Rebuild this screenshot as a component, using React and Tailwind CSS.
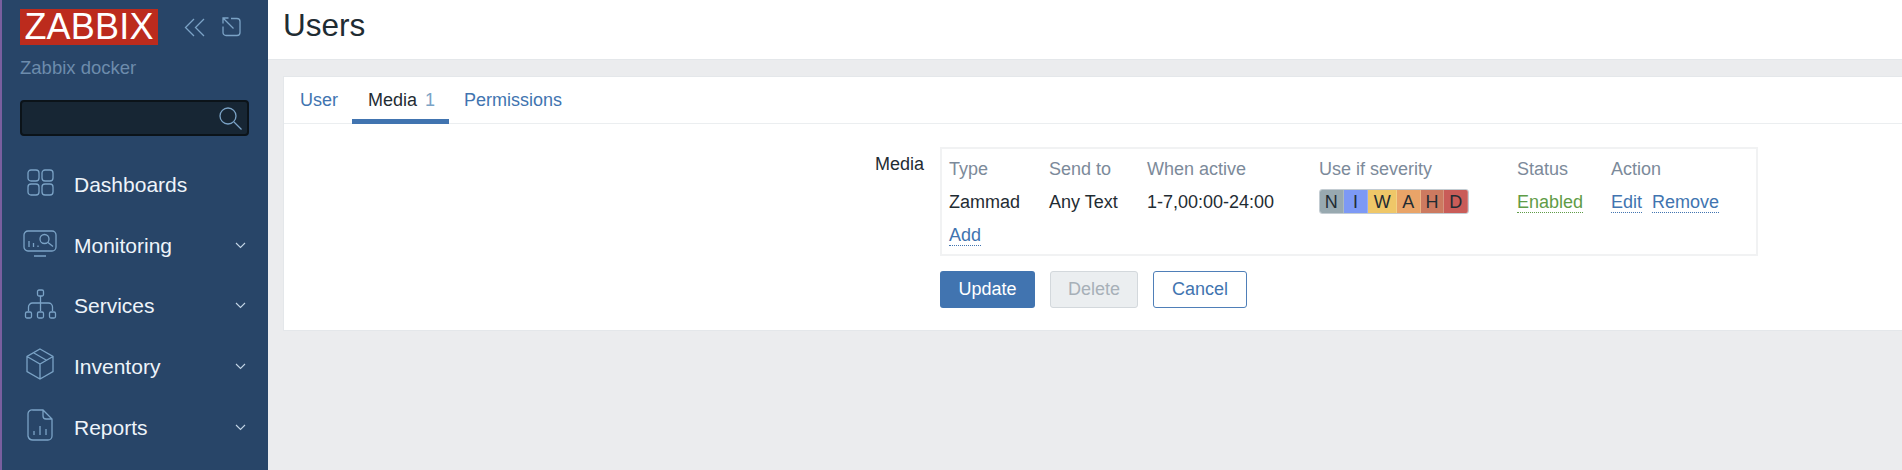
const F = { fontFamily: '"Liberation Sans", Arial, sans-serif' };

const Chevron = () => (
  <svg width="11" height="7" viewBox="0 0 11 7" fill="none" stroke="#c3d5e6" strokeWidth="1.100" className="ml-auto mr-[22px] shrink-0">
    <path d="M1 1l4.500 4.500L10 1" />
  </svg>
);

const S = { fill: "none", stroke: "#7ba3c6", strokeWidth: 1.3 };

const icons = {
  dash: (
    <svg width="27" height="27" viewBox="0 0 27 27" {...S}>
      <rect x="1" y="1" width="11" height="11" rx="3" />
      <rect x="15" y="1" width="11" height="11" rx="3" />
      <rect x="1" y="15" width="11" height="11" rx="3" />
      <rect x="15" y="15" width="11" height="11" rx="3" />
    </svg>
  ),
  mon: (
    <svg width="34" height="27" viewBox="0 0 34 27" {...S}>
      <rect x="1" y="1" width="32" height="20" rx="4" />
      <path d="M6 11v6M10.500 13v4M15 15.500v1.500" />
      <circle cx="21.500" cy="9" r="4.500" />
      <path d="m25 12.500 5 4M11 26h12" />
    </svg>
  ),
  serv: (
    <svg width="33" height="30" viewBox="0 0 33 30" {...S}>
      <rect x="13.500" y="1" width="6" height="6" rx="1.500" />
      <path d="M16.500 7v15M4.500 22v-4a4 4 0 0 1 4-4h16a4 4 0 0 1 4 4v4" />
      <rect x="1.500" y="23" width="6" height="6" rx="1.500" />
      <rect x="13.500" y="23" width="6" height="6" rx="1.500" />
      <rect x="25.500" y="23" width="6" height="6" rx="1.500" />
    </svg>
  ),
  inv: (
    <svg width="30" height="32" viewBox="0 0 30 32" {...S}>
      <path d="M15 1 28 8.500v15L15 31 2 23.500v-15zM2 8.500 15 16l13-7.500M15 16v15M8.500 4.800l13 7.500" />
    </svg>
  ),
  rep: (
    <svg width="26" height="32" viewBox="0 0 26 32" {...S}>
      <path d="M6 1h10l9 9v17a4 4 0 0 1-4 4H6a5 5 0 0 1-5-4V5a4 4 0 0 1 5-4zM16 1v6a3 3 0 0 0 3 3h6" />
      <path d="M7 22v4M13 17v9M19 20v6" />
    </svg>
  ),
};

const NavItem = ({ icon, label, chevron }) => (
  <div className="flex h-[60.700px] items-center text-[21px] leading-none text-[#eef4fa]">
    <div className="mb-[4px] flex w-[72px] shrink-0 justify-center pl-[4px]">{icon}</div>
    <span>{label}</span>
    {chevron && <Chevron />}
  </div>
);

const sev = [
  ["N", "bg-[#98a9b0]", "w-[24px]"],
  ["I", "bg-[#7d99f5]", "w-[25px]"],
  ["W", "bg-[#efc768]", "w-[29px]"],
  ["A", "bg-[#e9a468]", "w-[24px]"],
  ["H", "bg-[#cc7a60]", "w-[24px]"],
  ["D", "bg-[#c95c58]", "w-[24px]"],
];

const Link = ({ children, className = "" }) => (
  <span className={`border-b-[1.500px] border-dotted border-[#4174b0] text-[#4174b0] leading-[20px] ${className}`}>{children}</span>
);

const cols = "grid grid-cols-[100px_98px_172px_198px_94px_1fr]";

export default function App() {
  return (
    <div style={F} className="flex h-[470px] w-[1902px] overflow-hidden bg-[#ebecee]">
      <aside className="flex w-[268px] shrink-0 flex-col border-l-2 border-[#7a5f9f] bg-[#284568]">
        <div className="flex items-start pl-[18px] pt-[9px]">
          <div className="flex h-[36px] w-[138px] items-center justify-center bg-[#bc2b1d] text-[36px] leading-none tracking-[0.2px] text-white">ZABBIX</div>
          <svg width="21" height="19" viewBox="0 0 21 19" fill="none" stroke="#7ba3c6" strokeWidth="1.300" className="ml-[26px] mt-[9px]">
            <path d="M10 1 1.500 9.500 10 18M20 1l-8.500 8.500L20 18" />
          </svg>
          <svg width="19" height="20" viewBox="0 0 19 20" fill="none" stroke="#7ba3c6" strokeWidth="1.300" className="ml-[17px] mt-[8px]">
            <path d="M9 1.500h6a3 3 0 0 1 3 3v11a3 3 0 0 1-3 3H4a3 3 0 0 1-3-3V9.500M1.500 1.500l10 10M1 6.500V1h5.500" />
          </svg>
        </div>
        <div className="ml-[18px] mt-[13px] text-[18.500px] leading-[20px] text-[#6d8cac]">Zabbix docker</div>
        <div className="ml-[18px] mt-[22px] flex h-[36px] w-[229px] items-center justify-end rounded-[4px] border-2 border-[#0b1319] bg-[#172634] pr-[5px]">
          <svg width="23" height="23" viewBox="0 0 23 23" fill="none" stroke="#7ba3c6" strokeWidth="1.300">
            <circle cx="9" cy="9" r="8" />
            <path d="m15 15 7.500 7.500" />
          </svg>
        </div>
        <nav className="mt-[18px] flex flex-col">
          <NavItem icon={icons.dash} label="Dashboards" />
          <NavItem icon={icons.mon} label="Monitoring" chevron />
          <NavItem icon={icons.serv} label="Services" chevron />
          <NavItem icon={icons.inv} label="Inventory" chevron />
          <NavItem icon={icons.rep} label="Reports" chevron />
        </nav>
      </aside>

      <main className="min-w-0 flex-1">
        <header className="flex h-[60px] items-start border-b border-[#e4e7ea] bg-white pl-[15px] pt-[7px]">
          <h1 className="text-[31.500px] leading-[36px] text-[#1f2c33]">Users</h1>
        </header>
        <section className="ml-[15px] mt-[16px] h-[255px] border border-[#e4e7ea] border-r-0 bg-white">
          <div className="flex h-[47px] items-stretch border-b border-[#ebeef0] text-[18px]">
            <div className="flex items-center pl-[16px] pr-[14px] pt-[1px] text-[#4174b0]">User</div>
            <div className="-mb-[1px] flex items-center gap-[8px] border-b-[5px] border-[#4174b0] pl-[16px] pr-[14px] pt-[4px] text-[#1f2c33]">
              Media <span className="text-[18px] text-[#7ba3c6]">1</span>
            </div>
            <div className="flex items-center px-[15px] pt-[1px] text-[#4174b0]">Permissions</div>
          </div>

          <div className="flex pt-[23px] text-[18px] text-[#1f2c33]">
            <div className="w-[640px] shrink-0 pt-[7px] text-right leading-[20px]">Media</div>
            <div className="ml-[16px] flex flex-col">
              <div className="h-[109px] w-[818px] border-2 border-[#f1f2f3] pl-[7px] pt-[10px]">
                <div className={`${cols} leading-[20px] text-[#7c8a9a]`}>
                  <span>Type</span>
                  <span>Send to</span>
                  <span>When active</span>
                  <span>Use if severity</span>
                  <span>Status</span>
                  <span>Action</span>
                </div>
                <div className={`${cols} mt-[10px] items-center leading-[20px]`}>
                  <span>Zammad</span>
                  <span>Any Text</span>
                  <span>1-7,00:00-24:00</span>
                  <div className="flex h-[25px] w-[150px] overflow-hidden rounded-[3px] border border-[#c3ccd2] text-[#1f2c33]">
                    {sev.map(([l, bg, w]) => (
                      <div key={l} className={`flex items-center justify-center border-r border-white/20 ${bg} ${w}`}>{l}</div>
                    ))}
                  </div>
                  <div><Link className="!border-[#5f9c47] !text-[#5f9c47]">Enabled</Link></div>
                  <div>
                    <Link>Edit</Link>
                    <Link className="ml-[10px]">Remove</Link>
                  </div>
                </div>
                <div className="mt-[11px] leading-[20px]"><Link>Add</Link></div>
              </div>
              <div className="mt-[15px] flex gap-[15px]">
                <button className="h-[37px] w-[95px] rounded-[3px] bg-[#4174b0] text-[18px] text-white">Update</button>
                <button className="h-[37px] w-[88px] rounded-[3px] border border-[#d3d8dc] bg-[#ebeef0] text-[18px] text-[#a7b0b8]">Delete</button>
                <button className="h-[37px] w-[94px] rounded-[3px] border border-[#4f7fb8] bg-white text-[18px] text-[#4174b0]">Cancel</button>
              </div>
            </div>
          </div>
        </section>
      </main>
    </div>
  );
}
